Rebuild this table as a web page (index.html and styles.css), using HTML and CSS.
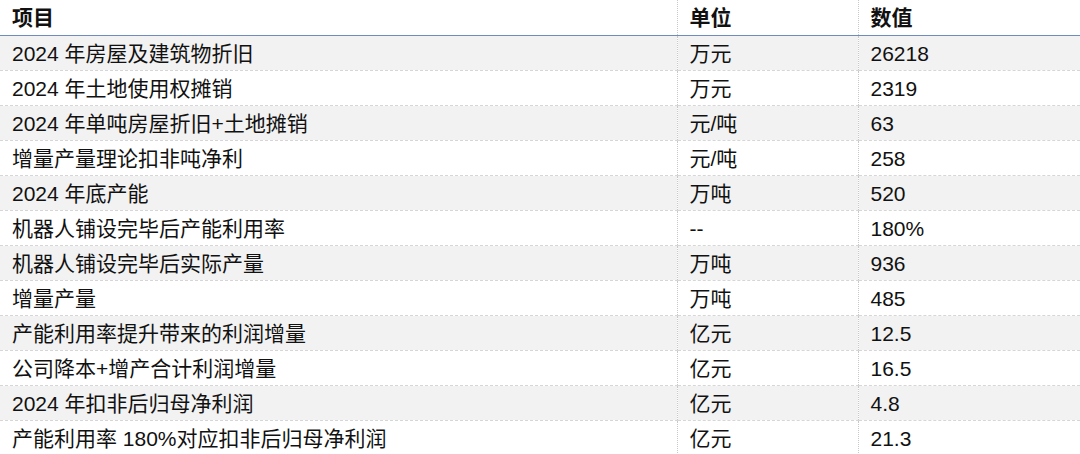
FILE: index.html
```html
<!DOCTYPE html>
<html lang="zh-CN">
<head>
<meta charset="utf-8">
<title>表</title>
<link rel="stylesheet" href="styles.css">
</head>
<body>
<table class="data">
  <colgroup>
    <col class="c1"><col class="c2"><col class="c3">
  </colgroup>
  <thead>
    <tr><th>项目</th><th>单位</th><th>数值</th></tr>
  </thead>
  <tbody>
    <tr><td>2024 年房屋及建筑物折旧</td><td>万元</td><td>26218</td></tr>
    <tr><td>2024 年土地使用权摊销</td><td>万元</td><td>2319</td></tr>
    <tr><td>2024 年单吨房屋折旧+土地摊销</td><td>元/吨</td><td>63</td></tr>
    <tr><td>增量产量理论扣非吨净利</td><td>元/吨</td><td>258</td></tr>
    <tr><td>2024 年底产能</td><td>万吨</td><td>520</td></tr>
    <tr><td>机器人铺设完毕后产能利用率</td><td>--</td><td>180%</td></tr>
    <tr><td>机器人铺设完毕后实际产量</td><td>万吨</td><td>936</td></tr>
    <tr><td>增量产量</td><td>万吨</td><td>485</td></tr>
    <tr><td>产能利用率提升带来的利润增量</td><td>亿元</td><td>12.5</td></tr>
    <tr><td>公司降本+增产合计利润增量</td><td>亿元</td><td>16.5</td></tr>
    <tr><td>2024 年扣非后归母净利润</td><td>亿元</td><td>4.8</td></tr>
    <tr><td>产能利用率 180%对应扣非后归母净利润</td><td>亿元</td><td>21.3</td></tr>
  </tbody>
</table>
</body>
</html>
```

FILE: styles.css
```css
html, body {
  margin: 0;
  padding: 0;
  background: #ffffff;
}
.data {
  width: 1080px;
  border-collapse: collapse;
  table-layout: fixed;
  font-family: "Liberation Sans", "Noto Sans CJK SC", sans-serif;
  font-size: 21px;
  color: #111111;
}
.c1 { width: 677px; }
.c2 { width: 181px; }
.c3 { width: 222px; }
.data th,
.data td {
  padding: 0 0 0 12px;
  text-align: left;
  white-space: nowrap;
  overflow: hidden;
  line-height: 1;
}
.data th {
  height: 35px;
  font-weight: bold;
  border-bottom: 1px solid #6e8cbf;
}
.data td {
  height: 34px;
  border-bottom: 1px dashed #d6d6d6;
}
.data th + th,
.data td + td {
  border-left: 1px dotted #c8c8c8;
}
.data tbody tr:nth-child(odd) td {
  background: #f2f2f2;
}
```
